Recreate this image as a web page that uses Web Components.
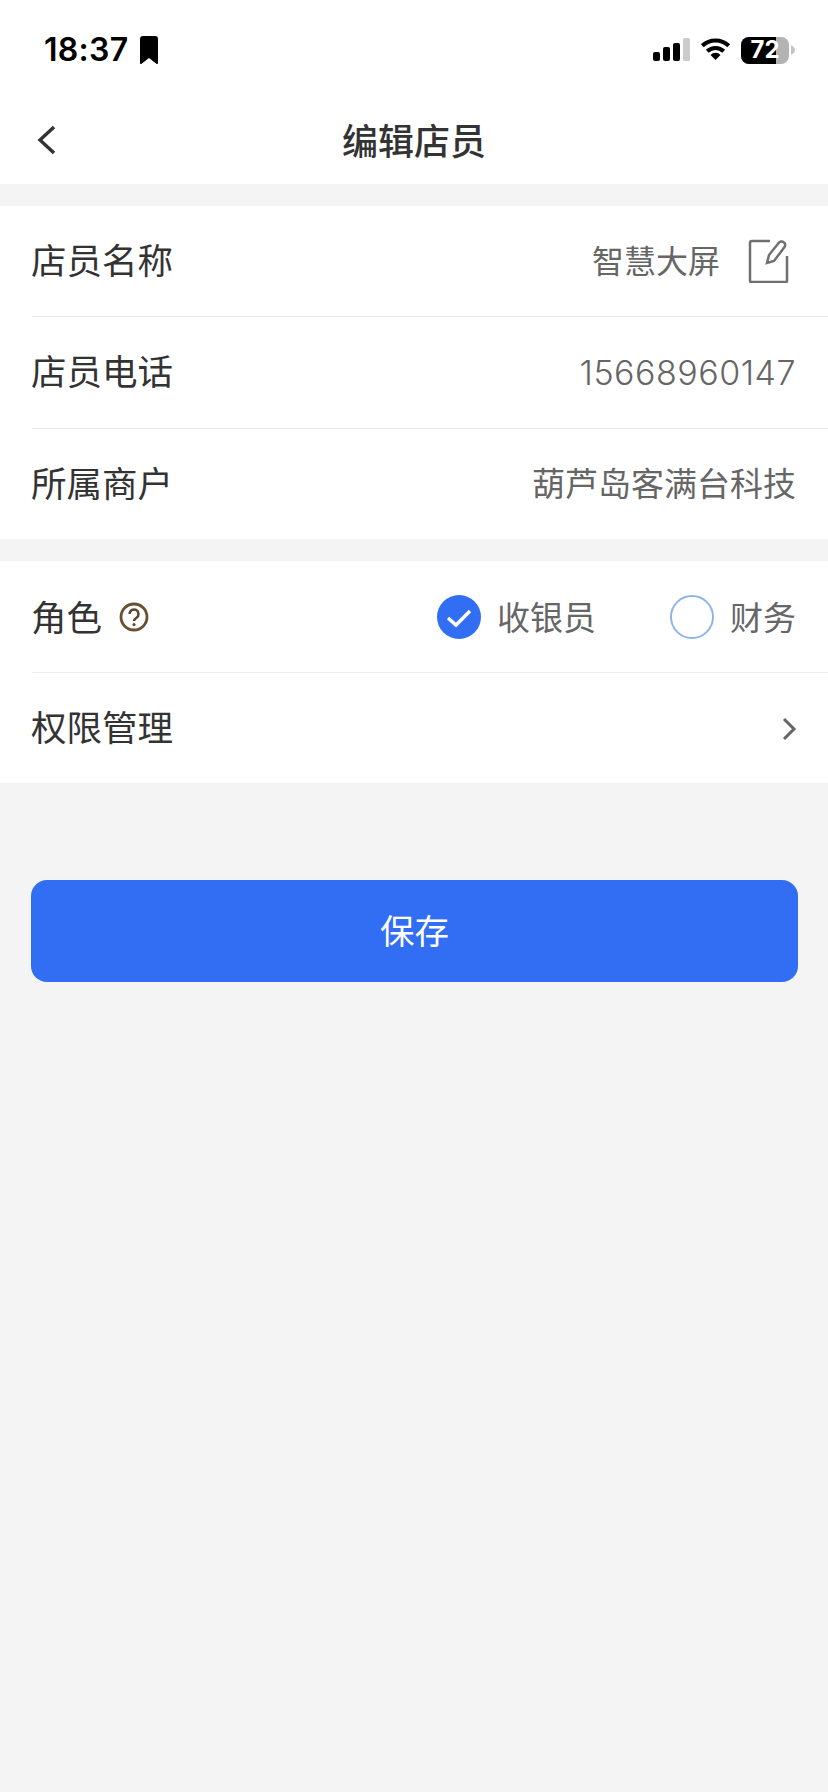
<!DOCTYPE html>
<html lang="zh"><head><meta charset="utf-8"><style>
html,body{margin:0;padding:0;background:#f4f4f4}
body{width:828px;height:1792px;overflow:hidden;font-family:"Noto Sans CJK SC","Inter",sans-serif}
</style></head><body>
<edit-page></edit-page>
<script>
const def=(n,html)=>customElements.define(n,class extends HTMLElement{constructor(){super();this.attachShadow({mode:'open'}).innerHTML=html}});
def('status-bar',`<style>
:host{display:flex;height:100px;background:#fff;align-items:center;justify-content:space-between;padding:0 33px 0 44px;box-sizing:border-box}
.l{display:flex;align-items:center;gap:11px;font:600 32px/1 Inter,sans-serif;color:#000;letter-spacing:.3px}
.r{display:flex;align-items:center;gap:10px}
.bat{position:relative;width:48px;height:27px;border-radius:8px;overflow:hidden;background:#b3b3b3;display:flex;align-items:center;justify-content:center;color:#fff;font:700 24px/1 Inter,sans-serif}
.bat i{position:absolute;left:0;top:0;bottom:0;width:72%;background:#000}
.bat span{position:relative}
</style>
<div class="l">18:37<svg width="18" height="28" viewBox="0 0 18 28"><path d="M3 0h12a3 3 0 0 1 3 3v24a1 1 0 0 1-1.6.8L9 22l-7.400 5.800A1 1 0 0 1 0 27V3a3 3 0 0 1 3-3z" fill="#000"/></svg></div>
<div class="r">
<svg width="37" height="24" viewBox="0 0 37 24"><rect x="0" y="14" width="7" height="9" rx="2" fill="#000"/><rect x="10" y="9" width="7" height="14" rx="2" fill="#000"/><rect x="20" y="5" width="7" height="18" rx="2" fill="#000"/><rect x="30" y="0" width="7" height="23" rx="1.500" fill="#ccc"/></svg>
<svg width="31" height="24" viewBox="0 0 34 26" style="margin-bottom:2px"><path d="M2.500 9.500a21 21 0 0 1 29 0" fill="none" stroke="#000" stroke-width="4.500"/><path d="M8 15.500a13 13 0 0 1 18 0" fill="none" stroke="#000" stroke-width="4.500"/><path d="M17 25l-5.500-5.500a7.800 7.800 0 0 1 11 0z" fill="#000"/></svg>
<div class="bat"><i></i><span>72</span></div>
<svg width="4" height="10" viewBox="0 0 4 10" style="margin-left:-8px"><path d="M0 0c2.500 1.500 4 3 4 5s-1.500 3.500-4 5z" fill="#c4c4c4"/></svg>
</div>`);
def('nav-bar',`<style>
:host{display:flex;position:relative;height:84px;background:#fff;align-items:center;justify-content:center}
svg{position:absolute;left:36px;top:23px}
.t{font:500 36px/1 "Noto Sans CJK SC",sans-serif;color:#333;padding-bottom:7px}
</style><svg width="22" height="34" viewBox="0 0 22 34"><path d="M18 4L4 17l14 13" fill="none" stroke="#333" stroke-width="3.400"/></svg><div class="t"><slot></slot></div>`);
def('form-group',`<style>:host{display:block;background:#fff;margin-top:22px}</style><slot></slot>`);
def('form-row',`<style>
:host{display:block;padding-left:32px;--h:111px}
.i{display:flex;align-items:center;justify-content:space-between;padding-right:32px;height:var(--h);box-sizing:border-box;border-bottom:1px solid #ececec}
:host([last]) .i{border-bottom:0}
.k{display:flex;align-items:center;margin-left:-1px;font:400 35.500px/1 "Noto Sans CJK SC",sans-serif;color:#333}
.v{display:flex;align-items:center;font:400 33px/1 "Noto Sans CJK SC",sans-serif;color:#666}
::slotted(span){display:block;padding-bottom:5px}
</style><div class="i"><div class="k"><slot name="k"></slot></div><div class="v"><slot></slot></div></div>`);
def('radio-opt',`<style>
:host{display:inline-flex;align-items:center;gap:16px;font:400 33px/1 "Noto Sans CJK SC",sans-serif;color:#666}
.c{width:44px;height:44px;box-sizing:border-box;border-radius:50%;border:2.500px solid #8fb4ea;background:#fff}
:host([on]) .c{background:#316ef4;border:0}
svg{display:none}:host([on]) svg{display:block}
</style><div class="c"><svg width="44" height="44" viewBox="0 0 44 44"><path d="M11 23l8 7 14-14" fill="none" stroke="#fff" stroke-width="3.500"/></svg></div><slot></slot>`);
def('primary-btn',`<style>
:host{display:flex;margin:97px 30px 0 31px;height:102px;border-radius:16px;background:#316ef4;color:#fff;align-items:center;justify-content:center;font:400 34.500px/1 "Noto Sans CJK SC",sans-serif}
span{padding-bottom:4px}
</style><span><slot></slot></span>`);
def('edit-page',`<style>:host{display:block}</style>
<status-bar></status-bar>
<nav-bar>编辑店员</nav-bar>
<form-group>
<form-row style="--h:111px"><span slot="k">店员名称</span><span style="font-size:32px">智慧大屏</span>
<svg style="margin:0 7px 0 27px" width="42" height="44" viewBox="0 0 40 44"><path d="M22 2H4a2 2 0 0 0-2 2v38a1 1 0 0 0 1 1h35a1 1 0 0 0 1-1V17" fill="none" stroke="#707070" stroke-width="2.500"/><path d="M19 24l2-8L31 3.500a3.500 3.500 0 0 1 5 0 3.500 3.500 0 0 1 .5 4.500L26 22z" fill="none" stroke="#707070" stroke-width="2.500"/></svg></form-row>
<form-row style="--h:112px"><span slot="k">店员电话</span><span style="font-family:Inter,sans-serif;font-weight:300;font-size:34px;letter-spacing:.5px;padding:0">15668960147</span></form-row>
<form-row last style="--h:110px"><span slot="k">所属商户</span><span style="padding-bottom:3px">葫芦岛客满台科技</span></form-row>
</form-group>
<form-group>
<form-row style="--h:112px"><span slot="k" style="padding-bottom:2px">角色</span>
<svg slot="k" style="margin-left:17px" width="30" height="30" viewBox="0 0 30 30"><circle cx="15" cy="15" r="13" fill="none" stroke="#6b4f2e" stroke-width="2.800"/><path d="M10.500 12a4.500 4.500 0 1 1 7 3.700c-1.500 1-2.500 1.800-2.500 3.300" fill="none" stroke="#5a4630" stroke-width="2.500"/><circle cx="15" cy="22.500" r="1.600" fill="#5a4630"/></svg>
<radio-opt on>收银员</radio-opt><radio-opt style="margin-left:74px">财务</radio-opt></form-row>
<form-row last style="--h:110px"><span slot="k">权限管理</span><svg style="margin:2px -1px 0 0" width="16" height="24" viewBox="0 0 16 24"><path d="M3 2l10 10L3 22" fill="none" stroke="#666" stroke-width="3"/></svg></form-row>
</form-group>
<primary-btn>保存</primary-btn>`);
</script></body></html>
